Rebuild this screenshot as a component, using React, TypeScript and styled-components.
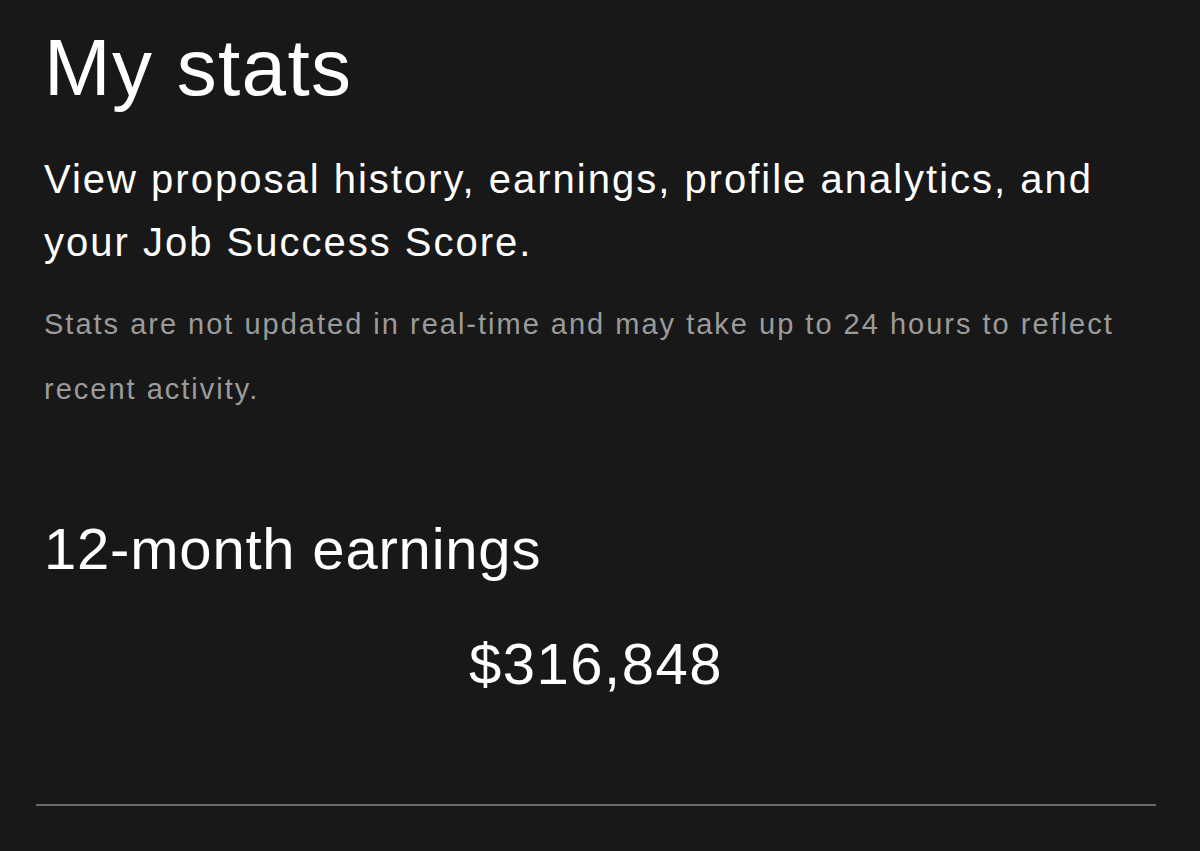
import React from "react";
import styled, { createGlobalStyle } from "styled-components";

const Global = createGlobalStyle`
  html, body { margin: 0; padding: 0; background: #181818; }
  body { font-family: "Liberation Sans", Arial, sans-serif; color: #ffffff; }
`;

const Page = styled.main`
  width: 1200px;
  height: 851px;
  box-sizing: border-box;
  padding: 20px 52px 0 44px;
  overflow: hidden;
  background: #181818;
`;

const Title = styled.h1`
  margin: 0;
  font-size: 80px;
  font-weight: 400;
  line-height: 96px;
  letter-spacing: 1.3px;
  color: #ffffff;
`;

const Lead = styled.p`
  margin: 32px 0 0 0;
  font-size: 40px;
  line-height: 63px;
  letter-spacing: 2px;
  color: #ffffff;
`;

const Note = styled.p`
  margin: 18px 0 0 0;
  font-size: 29px;
  line-height: 65px;
  letter-spacing: 2px;
  color: #9b9b9b;
`;

const SectionTitle = styled.h2`
  margin: 95px 0 0 0;
  font-size: 58px;
  font-weight: 400;
  line-height: 64px;
  letter-spacing: 0.8px;
  color: #ffffff;
`;

const Amount = styled.div`
  margin-top: 51px;
  text-align: center;
  font-size: 58px;
  line-height: 64px;
  letter-spacing: 1.5px;
  color: #ffffff;
`;

const Divider = styled.hr`
  margin: 108px -8px 0 -8px;
  border: none;
  height: 2px;
  background: #6a6a6a;
`;

export default function App() {
  return (
    <>
      <Global />
      <Page>
        <Title>My stats</Title>
        <Lead>
          View proposal history, earnings, profile analytics, and your Job Success Score.
        </Lead>
        <Note>
          Stats are not updated in real-time and may take up to 24 hours to reflect recent activity.
        </Note>
        <SectionTitle>12-month earnings</SectionTitle>
        <Amount>$316,848</Amount>
        <Divider />
      </Page>
    </>
  );
}
